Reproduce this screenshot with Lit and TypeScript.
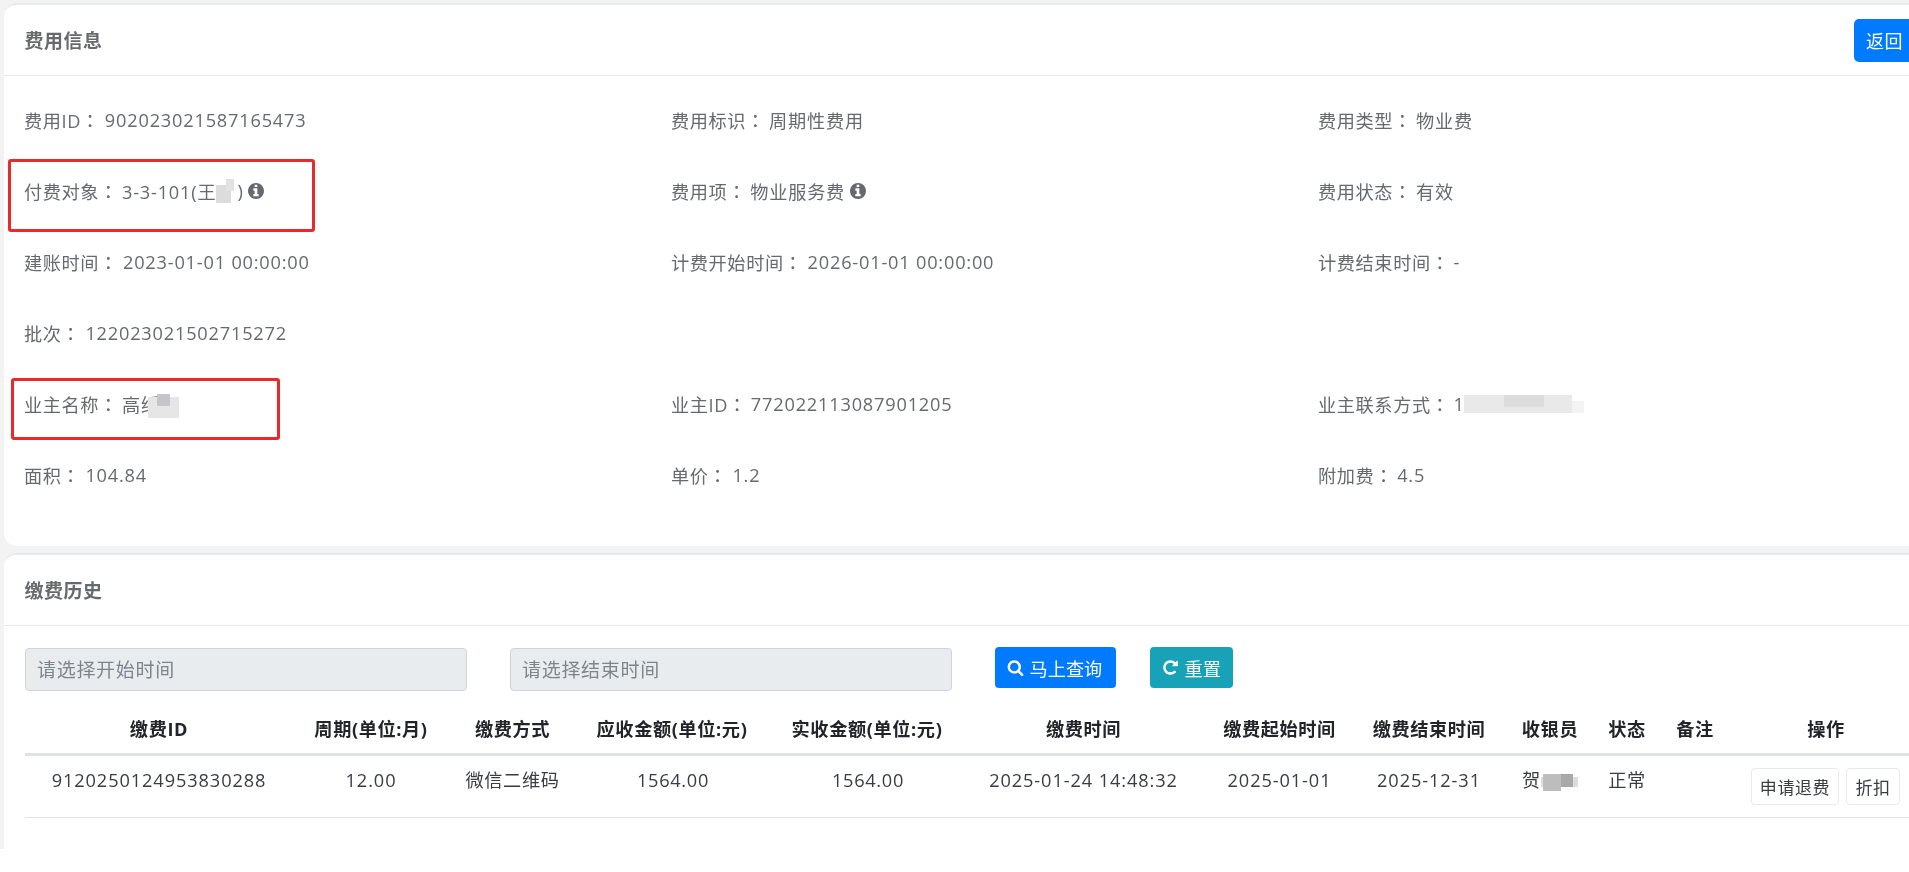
import { LitElement, html, css, svg } from "lit";
import { customElement } from "lit/decorators.js";

const infoIcon = svg`<path fill-rule="evenodd" d="M1152 1376v-160q0-14-9-23t-23-9h-96v-512q0-14-9-23t-23-9h-320q-14 0-23 9t-9 23v160q0 14 9 23t23 9h96v320h-96q-14 0-23 9t-9 23v160q0 14 9 23t23 9h448q14 0 23-9t9-23zm-128-896v-160q0-14-9-23t-23-9h-192q-14 0-23 9t-9 23v160q0 14 9 23t23 9h192q14 0 23-9t9-23zm640 416q0 209-103 385.500t-279.500 279.500-385.500 103-385.500-103-279.500-279.500-103-385.500 103-385.500 279.500-279.500 385.500-103 385.500 103 279.500 279.500 103 385.500z"/>`;
const searchIcon = svg`<path d="M1216 832q0-185-131.500-316.500t-316.500-131.500-316.500 131.500-131.500 316.500 131.500 316.500 316.500 131.500 316.500-131.500 131.500-316.500zm512 832q0 52-38 90t-90 38q-54 0-90-38l-343-342q-179 124-399 124-143 0-273.500-55.500t-225-150-150-225-55.500-273.500 55.500-273.500 150-225 225-150 273.500-55.500 273.500 55.500 225 150 150 225 55.500 273.500q0 220-124 399l343 343q37 37 37 90z"/>`;
const repeatIcon = svg`<path d="M1664 256v448q0 26-19 45t-45 19h-448q-42 0-59-40-17-39 14-69l138-138q-148-137-349-137-104 0-198.500 40.500t-163.500 109.500-109.500 163.500-40.500 198.500 40.500 198.500 109.500 163.500 163.500 109.500 198.500 40.500q119 0 225-52t179-147q7-10 23-12 15 0 25 9l137 138q9 8 9.500 20.500t-7.500 22.500q-109 132-264 204.500t-327 72.500q-156 0-298-61t-245-164-164-245-61-298 61-298 164-245 245-164 298-61q147 0 284.500 55.500t244.500 156.500l130-129q29-31 70-14 39 17 39 59z"/>`;

@customElement("app-root")
export class AppRoot extends LitElement {
  static styles = css`
    :host {
      display: block;
      position: relative;
      width: 1909px;
      height: 872px;
      overflow: hidden;
      background: #fff;
      font-family: "Open Sans", "Noto Sans CJK SC", sans-serif;
      font-size: 18.2px;
      letter-spacing: 0.6px;
      color: #676a6c;
      filter: blur(0.35px);
    }
    .page {
      height: 849px;
      box-sizing: border-box;
      padding: 3px 0 0 4px;
      background: #f3f3f4;
      overflow: hidden;
      display: flex;
      flex-direction: column;
      gap: 7px;
    }
    .card {
      width: 1935px;
      flex: none;
      box-sizing: border-box;
      background: #fff;
      border-top: 2px solid #e7eaec;
      border-radius: 13px;
    }
    .card.first { height: 543px; }
    .card.second { flex: 1; border-radius: 13px 13px 0 0; }
    .head {
      display: flex;
      align-items: center;
      justify-content: space-between;
      box-sizing: border-box;
      height: 71px;
      padding: 0 24px 0 20.5px;
      border-bottom: 1px solid #e7eaec;
    }
    .title {
      font-size: 19px;
      font-weight: 700;
      letter-spacing: 0.5px;
      color: #676a6c;
    }
    .back {
      width: 61px;
      height: 43px;
      border-radius: 5px;
      background: #007bff;
      color: #fff;
      display: flex;
      align-items: center;
      justify-content: center;
      font-size: 18px;
    }
    .info {
      display: grid;
      grid-template-columns: repeat(3, 647px);
      grid-auto-rows: 71px;
      align-items: center;
      padding: 8.5px 0 0 20px;
    }
    .item { display: flex; align-items: center; white-space: nowrap; }
    .colon { font-family: "Noto Sans CJK TC", sans-serif; }
    .val { margin-left: 4px; letter-spacing: 0.8px; }
    .val.n { margin-left: 5px; }
    .icon { width: 16px; height: 16px; fill: #676a6c; margin-left: 5px; flex: none; }
    .mosaic { display: inline-block; flex: none; height: 24px; }
    .m-name {
      width: 21px;
      background:
        linear-gradient(#e2e2e2, #e2e2e2) 10px 0 / 8px 12px no-repeat,
        linear-gradient(#dcdcdc, #dcdcdc) 0 6px / 15px 18px no-repeat;
    }
    .m-owner {
      width: 31px;
      margin: 3px 0 0 -12px;
      background:
        linear-gradient(#c6c6c8, #c6c6c8) 9px 0 / 13px 12px no-repeat,
        linear-gradient(#e6e6e6, #e6e6e6) 0 3px / 31px 21px no-repeat;
    }
    .m-phone {
      width: 120px;
      height: 18px;
      margin-left: -1px;
      background:
        linear-gradient(#dcdcdc, #dcdcdc) 40px 0 / 40px 12px no-repeat,
        linear-gradient(#e9e9e9, #e9e9e9) 0 0 / 108px 18px no-repeat,
        linear-gradient(#f3f3f3, #f3f3f3) 108px 6px / 12px 12px no-repeat;
    }
    .m-cash {
      width: 37px;
      height: 17px;
      vertical-align: middle;
      background:
        linear-gradient(#bdbdbd, #bdbdbd) 2px 0 / 18px 17px no-repeat,
        linear-gradient(#a9a9a9, #a9a9a9) 20px 0 / 12px 13px no-repeat,
        linear-gradient(#ddd, #ddd) 0 3px / 37px 10px no-repeat;
    }
    .filters {
      display: flex;
      align-items: flex-start;
      padding: 22px 0 0 20.5px;
    }
    .input {
      box-sizing: border-box;
      width: 442px;
      height: 43px;
      margin-right: 43px;
      padding: 0 0 2px 11.5px;
      display: flex;
      align-items: center;
      background: #e9ecef;
      border: 1.5px solid #ced4da;
      border-radius: 4px;
      color: #7d858c;
      font-size: 19px;
      letter-spacing: 0.7px;
    }
    .btn {
      box-sizing: border-box;
      height: 41px;
      margin-top: -1px;
      border-radius: 4px;
      color: #fff;
      display: flex;
      align-items: center;
      gap: 6px;
      font-size: 18.2px;
      letter-spacing: 0;
    }
    .btn svg { width: 17px; height: 17px; fill: #fff; flex: none; }
    .btn.query { width: 121px; background: #007bff; padding-left: 12px; margin-right: 34px; }
    .btn.reset { width: 83px; background: #17a2b8; padding-left: 12px; }
    table {
      margin: 11px 0 0 21px;
      width: 1891px;
      table-layout: fixed;
      border-collapse: collapse;
      color: #212529;
    }
    th, td { text-align: center; padding: 0; }
    th {
      height: 51px;
      font-weight: 700;
      border-bottom: 3px solid #dee2e6;
      vertical-align: middle;
    }
    td {
      height: 61px;
      vertical-align: top;
      border-bottom: 1px solid #e2e5e8;
      color: #3a3d40;
    }
    td .t { display: block; line-height: 26px; padding-top: 11px; white-space: nowrap; }
    td .t.n { letter-spacing: 0.9px; }
    td .t.m { letter-spacing: 0.7px; padding-left: 2px; }
    th:nth-child(1) { width: 268px; }
    th:nth-child(2) { width: 156px; }
    th:nth-child(3) { width: 127px; }
    th:nth-child(4) { width: 192px; }
    th:nth-child(5) { width: 198px; }
    th:nth-child(6) { width: 235px; }
    th:nth-child(7) { width: 157px; }
    th:nth-child(8) { width: 142px; }
    th:nth-child(9) { width: 100px; }
    th:nth-child(10) { width: 54px; }
    th:nth-child(11) { width: 82px; }
    th:nth-child(12) { width: 180px; }
    .ops { display: flex; gap: 7px; padding: 12px 0 0 15px; }
    .op {
      box-sizing: border-box;
      height: 37px;
      display: flex;
      align-items: center;
      justify-content: center;
      background: #fff;
      border: 1.5px solid #e7eaec;
      border-radius: 4px;
      font-size: 17px;
      color: #3a3d40;
    }
    .op.wide { width: 88px; }
    .op.narrow { width: 54px; }
    .note {
      position: absolute;
      box-sizing: border-box;
      border: 3px solid #e82a2a;
      border-radius: 3px;
      pointer-events: none;
    }
    .note.a { left: 8px; top: 159px; width: 307px; height: 73px; }
    .note.b { left: 11px; top: 378px; width: 269px; height: 62px; }
  `;

  private info() {
    return svg`<svg class="icon" viewBox="128 128 1536 1536">${infoIcon}</svg>`;
  }

  private label(text: string) {
    return html`${text}<span class="colon">：</span>`;
  }

  render() {
    const heads = ["缴费ID", "周期(单位:月)", "缴费方式", "应收金额(单位:元)", "实收金额(单位:元)", "缴费时间", "缴费起始时间", "缴费结束时间", "收银员", "状态", "备注", "操作"];
    return html`
      <div class="page">
        <section class="card first">
          <div class="head">
            <div class="title">费用信息</div>
            <div class="back">返回</div>
          </div>
          <div class="info">
            <div class="item">${this.label("费用ID")}<span class="val n">902023021587165473</span></div>
            <div class="item">${this.label("费用标识")}<span class="val">周期性费用</span></div>
            <div class="item">${this.label("费用类型")}<span class="val">物业费</span></div>

            <div class="item">${this.label("付费对象")}<span class="val">3-3-101(王</span><span class="mosaic m-name"></span>)${this.info()}</div>
            <div class="item">${this.label("费用项")}<span class="val">物业服务费</span>${this.info()}</div>
            <div class="item">${this.label("费用状态")}<span class="val">有效</span></div>

            <div class="item">${this.label("建账时间")}<span class="val n">2023-01-01 00:00:00</span></div>
            <div class="item">${this.label("计费开始时间")}<span class="val n">2026-01-01 00:00:00</span></div>
            <div class="item">${this.label("计费结束时间")}<span class="val">-</span></div>

            <div class="item">${this.label("批次")}<span class="val n">122023021502715272</span></div>
            <div class="item"></div>
            <div class="item"></div>

            <div class="item">${this.label("业主名称")}<span class="val">高绣</span><span class="mosaic m-owner"></span></div>
            <div class="item">${this.label("业主ID")}<span class="val">772022113087901205</span></div>
            <div class="item">${this.label("业主联系方式")}<span class="val">1</span><span class="mosaic m-phone"></span></div>

            <div class="item">${this.label("面积")}<span class="val n">104.84</span></div>
            <div class="item">${this.label("单价")}<span class="val n">1.2</span></div>
            <div class="item">${this.label("附加费")}<span class="val">4.5</span></div>
          </div>
        </section>
        <section class="card second">
          <div class="head"><div class="title">缴费历史</div></div>
          <div class="filters">
            <div class="input">请选择开始时间</div>
            <div class="input">请选择结束时间</div>
            <div class="btn query"><svg viewBox="0 0 1792 1792">${searchIcon}</svg>马上查询</div>
            <div class="btn reset"><svg viewBox="0 0 1792 1792">${repeatIcon}</svg>重置</div>
          </div>
          <table>
            <thead><tr>${heads.map((h) => html`<th>${h}</th>`)}</tr></thead>
            <tbody>
              <tr>
                <td><span class="t n">9120250124953830288</span></td>
                <td><span class="t n">12.00</span></td>
                <td><span class="t">微信二维码</span></td>
                <td><span class="t m">1564.00</span></td>
                <td><span class="t m">1564.00</span></td>
                <td><span class="t n">2025-01-24 14:48:32</span></td>
                <td><span class="t n">2025-01-01</span></td>
                <td><span class="t n">2025-12-31</span></td>
                <td><span class="t">贺<span class="mosaic m-cash"></span></span></td>
                <td><span class="t">正常</span></td>
                <td></td>
                <td><div class="ops"><div class="op wide">申请退费</div><div class="op narrow">折扣</div></div></td>
              </tr>
            </tbody>
          </table>
        </section>
      </div>
      <div class="note a"></div>
      <div class="note b"></div>
    `;
  }
}
